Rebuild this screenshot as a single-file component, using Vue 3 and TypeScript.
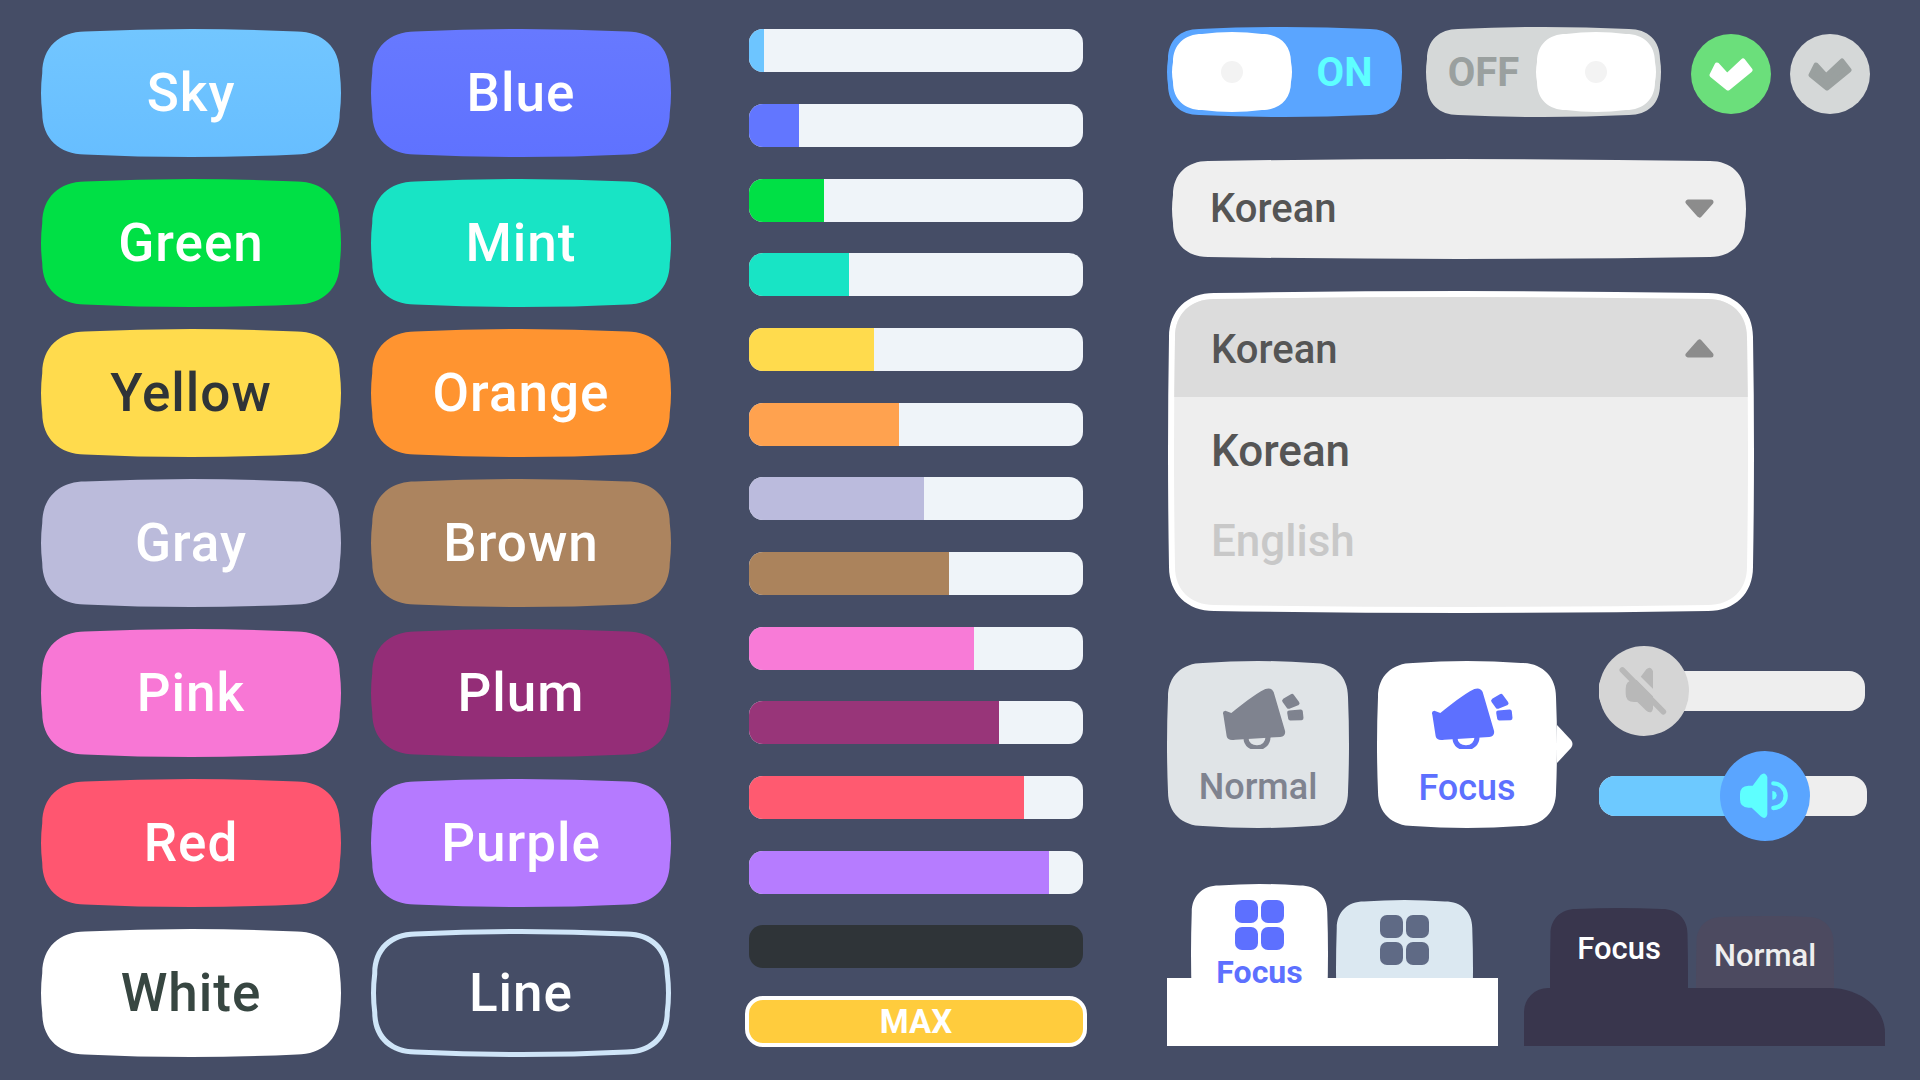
<script setup lang="ts">
// squircle outline used for every "blobby" corner on this sheet
function sq(w: number, h: number, r: number, b: number) {
  const s = b * 0.5 // the long edges bulge more than the short ones
  const k = 0.42
  const d = `M${r} ${b}Q${w / 2} ${-b} ${w - r} ${b}C${w - r * k} ${b} ${w - s} ${r * k} ${w - s} ${r}Q${w + s} ${h / 2} ${w - s} ${h - r}C${w - s} ${h - r * k} ${w - r * k} ${h - b} ${w - r} ${h - b}Q${w / 2} ${h + b} ${r} ${h - b}C${r * k} ${h - b} ${s} ${h - r * k} ${s} ${h - r}Q${-s} ${h / 2} ${s} ${r}C${s} ${r * k} ${r * k} ${b} ${r} ${b}Z`
  return { clipPath: `path('${d}')` }
}

const buttons = ['Sky', 'Blue', 'Green', 'Mint', 'Yellow', 'Orange', 'Gray', 'Brown', 'Pink', 'Plum', 'Red', 'Purple', 'White']

const bars = [
  { color: '#6dc5ff', width: 15 },
  { color: '#6276ff', width: 50 },
  { color: '#00e045', width: 75 },
  { color: '#18e4c5', width: 100 },
  { color: '#ffdb4d', width: 125 },
  { color: '#ffa24f', width: 150 },
  { color: '#bbbbdd', width: 175 },
  { color: '#ab835c', width: 200 },
  { color: '#f87bd7', width: 225 },
  { color: '#983579', width: 250 },
  { color: '#ff5a70', width: 275 },
  { color: '#b67cff', width: 300 },
  { color: '#2f3438', width: 334 },
]

const btnShape = sq(300, 128, 44, 2.5)
const lineInner = sq(290, 118, 40, 2.5)
const tabShape = sq(137, 140, 28, 1.5)
const tabShapeDark = sq(138, 140, 26, 1)
</script>

<template>
  <div class="page">
    <div class="buttons">
      <div v-for="name in buttons" :key="name" class="btn" :class="name.toLowerCase()" :style="btnShape">{{ name }}</div>
      <div class="btn line" :style="btnShape">
        <div class="line-inner" :style="lineInner">Line</div>
      </div>
    </div>

    <div class="bars">
      <div v-for="bar in bars" :key="bar.color" class="bar">
        <div class="fill" :style="{ width: bar.width + 'px', background: bar.color }"></div>
      </div>
      <div class="max">MAX</div>
    </div>

    <div class="side">
      <div class="toggles">
        <div class="toggle on" :style="sq(235, 90, 32, 2)">
          <div class="thumb" :style="sq(120, 80, 30, 2)"><i></i></div>
          <span class="toggle-label">ON</span>
        </div>
        <div class="toggle off" :style="sq(235, 90, 32, 2)">
          <span class="toggle-label">OFF</span>
          <div class="thumb" :style="sq(120, 80, 30, 2)"><i></i></div>
        </div>
        <div class="check green">
          <svg width="44" height="33" viewBox="0 0 44 33"><path d="M8 7 18 18 34 3 41 12 19 30 3 17Z" fill="#fff" stroke="#fff" stroke-width="5" stroke-linejoin="round" /></svg>
        </div>
        <div class="check grey">
          <svg width="44" height="33" viewBox="0 0 44 33"><path d="M8 7 18 18 34 3 41 12 19 30 3 17Z" fill="#9aa09f" stroke="#9aa09f" stroke-width="5" stroke-linejoin="round" /></svg>
        </div>
      </div>

      <div class="select" :style="sq(574, 100, 36, 2)">
        <span>Korean</span>
        <svg width="29" height="19" viewBox="0 0 29 19"><path d="M3 3H26L14.5 16Z" fill="#8c8c8c" stroke="#8c8c8c" stroke-width="5" stroke-linejoin="round" /></svg>
      </div>

      <div class="select-open" :style="sq(586, 322, 46, 2)">
        <div class="select-panel" :style="sq(574, 310, 40, 2)">
          <div class="select-head">
            <span>Korean</span>
            <svg width="29" height="19" viewBox="0 0 29 19"><path d="M3 16H26L14.5 3Z" fill="#8c8c8c" stroke="#8c8c8c" stroke-width="5" stroke-linejoin="round" /></svg>
          </div>
          <div class="option">Korean</div>
          <div class="option muted">English</div>
        </div>
      </div>

      <div class="mid">
        <div class="tile normal" :style="sq(182, 167, 36, 2)">
          <svg width="82" height="61" viewBox="0 0 246 183" fill="currentColor">
            <path d="M4 80Q0 70 10 68L28 75C60 50 95 20 130 3Q148 -3 155 12L189 128Q192 145 175 147L40 155Q18 160 14 145Z" />
            <path d="M72 150C72 190 140 190 138 145" fill="none" stroke="currentColor" stroke-width="15" />
            <path d="M187 38 210 24 226 46 200 56Z" stroke="currentColor" stroke-width="13" stroke-linejoin="round" />
            <path d="M202 74 236 71 238 90 205 91Z" stroke="currentColor" stroke-width="13" stroke-linejoin="round" />
          </svg>
          <span>Normal</span>
        </div>
        <div class="tile-wrap">
          <div class="tile focus" :style="sq(180, 167, 36, 2)">
            <svg width="82" height="61" viewBox="0 0 246 183" fill="currentColor">
              <path d="M4 80Q0 70 10 68L28 75C60 50 95 20 130 3Q148 -3 155 12L189 128Q192 145 175 147L40 155Q18 160 14 145Z" />
              <path d="M72 150C72 190 140 190 138 145" fill="none" stroke="currentColor" stroke-width="15" />
              <path d="M187 38 210 24 226 46 200 56Z" stroke="currentColor" stroke-width="13" stroke-linejoin="round" />
              <path d="M202 74 236 71 238 90 205 91Z" stroke="currentColor" stroke-width="13" stroke-linejoin="round" />
            </svg>
            <span>Focus</span>
          </div>
          <svg class="tail" width="16" height="38" viewBox="0 0 16 38"><path d="M0 0 14 15Q17 19 14 23L0 38Z" fill="#fff" /></svg>
        </div>
        <div class="sliders">
          <div class="slider mute">
            <div class="track"></div>
            <div class="knob">
              <svg width="90" height="90" viewBox="0 0 270 270">
                <path transform="translate(20 -2)" d="M60 130Q60 105 85 104H98L122 72Q135 60 142 78V190Q138 208 122 196L95 170H85Q60 170 60 145Z" fill="#b8b8b8" />
                <path d="M80 58 207 185" stroke="#d5d5d5" stroke-width="16" />
                <path d="M70 72 193 197" stroke="#b8b8b8" stroke-width="17" stroke-linecap="round" />
              </svg>
            </div>
          </div>
          <div class="slider sound">
            <div class="track"><div class="track-fill"></div></div>
            <div class="knob">
              <svg width="90" height="90" viewBox="0 0 270 270" fill="#5effff">
                <path d="M60 130Q60 105 85 104H98L122 72Q135 60 142 78V190Q138 208 122 196L95 170H85Q60 170 60 145Z" />
                <path d="M157 120A13 13 0 0 1 157 146Z" />
                <path d="M160 97A37 37 0 0 1 160 171" fill="none" stroke="#5effff" stroke-width="13" stroke-linecap="round" />
              </svg>
            </div>
          </div>
        </div>
      </div>

      <div class="tabs-row">
        <div class="tabs light">
          <div class="tab-list">
            <div class="tab active" :style="tabShape">
              <div class="grid-icon"><i></i><i></i><i></i><i></i></div>
              <span>Focus</span>
            </div>
            <div class="tab" :style="tabShape">
              <div class="grid-icon"><i></i><i></i><i></i><i></i></div>
            </div>
          </div>
          <div class="tab-body"></div>
        </div>
        <div class="tabs dark">
          <div class="tab-list">
            <div class="tab active" :style="tabShapeDark">Focus</div>
            <div class="tab" :style="tabShapeDark">Normal</div>
          </div>
          <div class="tab-body"></div>
        </div>
      </div>
    </div>
  </div>
</template>

<style scoped>
.page {
  display: flex;
  align-items: flex-start;
  width: 1920px;
  height: 1080px;
  box-sizing: border-box;
  padding: 29px 0 0 41px;
  background: #454d66;
  font-family: Roboto, "Noto Sans", sans-serif;
  overflow: hidden;
}

/* buttons */
.buttons {
  display: grid;
  grid-template-columns: 300px 300px;
  gap: 22px 30px;
}
.btn {
  height: 128px;
  display: flex;
  align-items: center;
  justify-content: center;
  font-size: 53px;
  font-weight: 500;
  letter-spacing: 1px;
  color: #fff;
}
.sky { background: linear-gradient(#72c6ff, #67beff); }
.blue { background: linear-gradient(#6779ff, #5f72ff); }
.green { background: #00e045; }
.mint { background: #18e4c5; }
.yellow { background: #ffdb4d; color: #2f3438; }
.orange { background: #ff9430; }
.gray { background: #bbbbdb; }
.brown { background: #ac845f; }
.pink { background: #f877d5; }
.plum { background: #942d77; }
.red { background: #ff5670; }
.purple { background: #b57aff; }
.white { background: #fff; color: #374641; }
.line { background: #cfe5f8; }
.line-inner {
  width: 290px;
  height: 118px;
  display: flex;
  align-items: center;
  justify-content: center;
  background: #454d66;
}

/* progress bars */
.bars {
  width: 334px;
  margin: 0.4px 0 0 78px;
  display: flex;
  flex-direction: column;
  gap: 31.67px;
}
.bar {
  height: 43px;
  border-radius: 14px;
  overflow: hidden;
  background: #eff4f9;
}
.fill {
  height: 100%;
}
.max {
  margin: -4px -4px 0;
  height: 51px;
  box-sizing: border-box;
  border: 4px solid #fff;
  border-radius: 18px;
  background: #ffcc3d;
  color: #fff;
  font-size: 33px;
  font-weight: 700;
  line-height: 43px;
  text-align: center;
}

/* right column */
.side {
  width: 720px;
  margin: -2px 0 0 84px;
}
.toggles {
  display: flex;
  align-items: flex-start;
}
.toggle {
  width: 235px;
  height: 90px;
  display: flex;
  align-items: center;
  box-sizing: border-box;
  padding: 0 5px;
  font-size: 40px;
  font-weight: 700;
}
.toggle.on { background: #5aa5ff; color: #5effff; }
.toggle.off { background: #d5d8d8; color: #9aa09f; margin-left: 24px; }
.toggle-label {
  flex: 1;
  text-align: center;
}
.thumb {
  width: 120px;
  height: 80px;
  flex: none;
  display: flex;
  align-items: center;
  justify-content: center;
  background: #fff;
}
.thumb i {
  width: 22px;
  height: 22px;
  border-radius: 50%;
  background: #f3f3f3;
}
.check {
  width: 80px;
  height: 80px;
  margin-top: 7px;
  border-radius: 50%;
  display: flex;
  align-items: center;
  justify-content: center;
}
.check.green { background: #6bdf7b; margin-left: 30px; }
.check.grey { background: #d5d8d8; margin-left: 19px; }

.select {
  width: 574px;
  height: 100px;
  margin: 42px 0 0 5px;
  display: flex;
  align-items: center;
  justify-content: space-between;
  box-sizing: border-box;
  padding: 0 32px 2px 38px;
  background: #efefef;
  color: #555;
  font-size: 40px;
  font-weight: 500;
}
.select-open {
  width: 586px;
  height: 322px;
  margin: 32px 0 0 1px;
  padding: 6px;
  box-sizing: border-box;
  background: #fff;
}
.select-panel {
  height: 310px;
  background: #eee;
}
.select-head {
  height: 100px;
  display: flex;
  align-items: center;
  justify-content: space-between;
  box-sizing: border-box;
  padding: 4px 34px 0 37px;
  background: #dcdcdc;
  color: #555;
  font-size: 40px;
  font-weight: 500;
}
.select-head svg { margin-top: -2px; }
.option {
  height: 90px;
  padding: 0 37px;
  line-height: 90px;
  color: #555;
  font-size: 44px;
  font-weight: 500;
}
.select-head + .option { margin-top: 9px; }
.option.muted { color: #c8c8c8; }

/* tiles + sliders */
.mid {
  display: flex;
  align-items: flex-start;
  margin-top: 48px;
}
.tile {
  width: 182px;
  height: 167px;
  display: flex;
  flex-direction: column;
  align-items: center;
  box-sizing: border-box;
  padding-top: 27px;
  font-size: 36px;
  font-weight: 500;
}
.tile svg { transform: translateX(5px); }
.tile span { line-height: 42px; margin-top: 17px; }
.tile.normal { background: #e0e4e7; color: #7f838f; }
.tile.focus { width: 180px; background: #fff; color: #5d70ff; }
.tile.focus span { margin-top: 18px; }
.tile-wrap {
  position: relative;
  margin-left: 28px;
}
.tail {
  position: absolute;
  left: 180px;
  top: 64px;
}
.sliders {
  width: 270px;
  margin: -15px 0 0 42px;
}
.slider {
  position: relative;
  height: 90px;
  display: flex;
  align-items: center;
}
.slider.sound { margin-top: 15px; }
.track {
  width: 266px;
  height: 40px;
  border-radius: 16px;
  overflow: hidden;
  background: #eee;
}
.slider.sound .track { width: 268px; }
.track-fill {
  width: 140px;
  height: 100%;
  background: #6dc9ff;
}
.knob {
  position: absolute;
  top: 0;
  left: 0;
  width: 90px;
  height: 90px;
  border-radius: 50%;
  background: #d5d5d5;
}
.slider.sound .knob {
  left: 121px;
  background: #5aa5ff;
}
.knob svg { display: block; }

/* tabs */
.tabs-row {
  display: flex;
  align-items: flex-end;
  margin-top: 43px;
}
.tabs.light { width: 331px; }
.tabs.dark { width: 361px; margin-left: 26px; }
.tab-list {
  display: flex;
  align-items: flex-end;
  position: relative;
  z-index: 1;
}
.tab-body { height: 68px; background: #fff; }
.light .tab-list { gap: 8px; padding-left: 24px; }
.light .tab {
  width: 137px;
  height: 78px;
  box-sizing: border-box;
  padding-top: 15px;
  background: #dbe8f1;
  display: flex;
  flex-direction: column;
  align-items: center;
}
.light .tab.active {
  height: 106px;
  margin-bottom: -12px;
  padding-top: 16px;
  background: #fff;
  color: #5d70ff;
  font-size: 32px;
  font-weight: 700;
  line-height: 32px;
}
.light .tab.active span { margin-top: 6px; }
.grid-icon {
  display: grid;
  grid-template-columns: 23px 23px;
  gap: 3.5px;
}
.grid-icon i {
  height: 23px;
  border-radius: 7px;
  background: #5f6a85;
}
.active .grid-icon i { background: #5d70ff; }
.dark .tab-list { gap: 8px; padding-left: 26px; }
.dark .tab {
  width: 138px;
  height: 72px;
  box-sizing: border-box;
  padding-top: 6px;
  background: #4c4a60;
  color: #eee;
  font-size: 31px;
  font-weight: 500;
  display: flex;
  align-items: center;
  justify-content: center;
}
.dark .tab.active {
  height: 80px;
  padding-top: 0;
  background: #39364d;
  color: #fff;
}
.dark .tab-body {
  height: 58px;
  background: #39364d;
  border-radius: 24px 55px 0 0 / 24px 45px 0 0;
}
</style>

<style>
html, body { background: #454d66; }
</style>
